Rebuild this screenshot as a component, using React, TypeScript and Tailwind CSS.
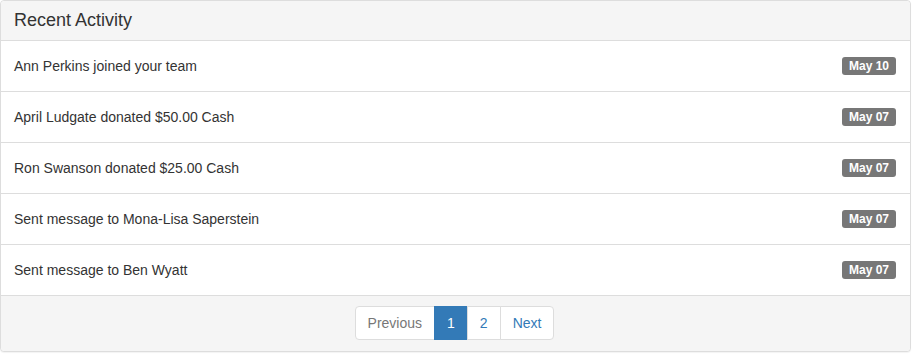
import React from "react";

const items = [
  { text: "Ann Perkins joined your team", date: "May 10" },
  { text: "April Ludgate donated $50.00 Cash", date: "May 07" },
  { text: "Ron Swanson donated $25.00 Cash", date: "May 07" },
  { text: "Sent message to Mona-Lisa Saperstein", date: "May 07" },
  { text: "Sent message to Ben Wyatt", date: "May 07" },
];

export default function App() {
  return (
    <div className="bg-white w-[913px] h-[354px] font-['Liberation_Sans',Arial,sans-serif] text-[#333]">
      <div className="w-[911px] border border-[#ddd] rounded bg-white shadow-[0_1px_1px_rgba(0,0,0,0.05)]">
        <div className="bg-[#f5f5f5] border-b border-[#ddd] px-[13px] pt-[9px] pb-[10px] rounded-t">
          <h3 className="text-[18px] leading-[20px]">Recent Activity</h3>
        </div>
        <ul>
          {items.map((it, i) => (
            <li
              key={i}
              className="flex items-center justify-between h-[51px] pl-[13px] pr-[14px] border-b border-[#ddd] text-[14px] leading-[20px]"
            >
              <span>{it.text}</span>
              <span className="bg-[#777] text-white text-[12px] font-bold leading-[12px] px-[7px] py-[3px] rounded-[3px]">
                {it.date}
              </span>
            </li>
          ))}
        </ul>
        <div className="bg-[#f5f5f5] pt-[10px] pb-[11px] pr-[2px] flex justify-center rounded-b">
          <div className="flex text-[14px] leading-[20px]">
            <span className="px-[12px] py-[6px] border border-[#ddd] bg-white text-[#777] rounded-l">Previous</span>
            <span className="px-[12px] py-[6px] border border-[#337ab7] bg-[#337ab7] text-white -ml-px">1</span>
            <span className="px-[12px] py-[6px] border border-[#ddd] bg-white text-[#337ab7] -ml-px">2</span>
            <span className="px-[12px] py-[6px] border border-[#ddd] bg-white text-[#337ab7] -ml-px rounded-r">Next</span>
          </div>
        </div>
      </div>
    </div>
  );
}
